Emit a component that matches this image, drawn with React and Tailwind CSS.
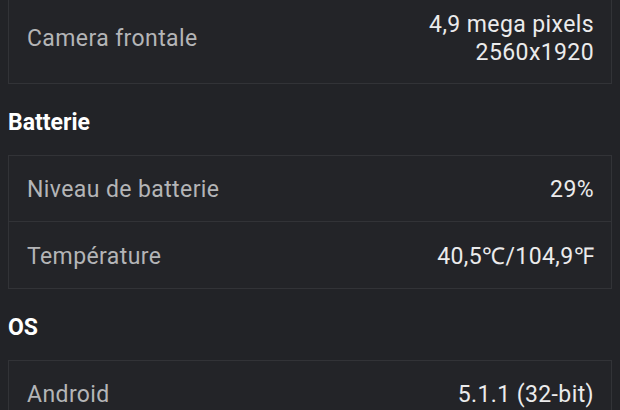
export default function App() {
  const label = "text-[#b4b5b7]";
  const value = "text-[#ebebec] text-right";
  const row = "flex items-center justify-between pl-[18px] pr-[17px]";
  return (
    <div className="w-[620px] h-[410px] overflow-hidden bg-[#222327] font-['Roboto',sans-serif] text-[23px] leading-[28px] tracking-[0.4px]">
      <div className="mx-2 -mt-[6px] border border-[#323337] bg-[#232428]">
        <div className={`${row} py-4`}>
          <span className={label}>Camera frontale</span>
          <div className={value}>
            <div>4,9 mega pixels</div>
            <div>2560x1920</div>
          </div>
        </div>
      </div>

      <h2 className="mt-[25px] mb-[18px] pl-2 text-[23px] font-bold tracking-normal text-white">Batterie</h2>
      <div className="mx-2 border border-[#323337] bg-[#232428] divide-y divide-[#323337]">
        <div className={`${row} pt-[20px] pb-[17px]`}>
          <span className={label}>Niveau de batterie</span>
          <span className={value}>29%</span>
        </div>
        <div className={`${row} pt-[21px] pb-[17px]`}>
          <span className={label}>Température</span>
          <span className={value}>40,5℃/104,9℉</span>
        </div>
      </div>

      <h2 className="mt-[25px] mb-[18px] pl-2 text-[23px] font-bold tracking-normal text-white">OS</h2>
      <div className="mx-2 border border-[#323337] bg-[#232428] divide-y divide-[#323337]">
        <div className={`${row} pt-[20px] pb-[18px]`}>
          <span className={label}>Android</span>
          <span className={value}>5.1.1 (32-bit)</span>
        </div>
      </div>
    </div>
  );
}
